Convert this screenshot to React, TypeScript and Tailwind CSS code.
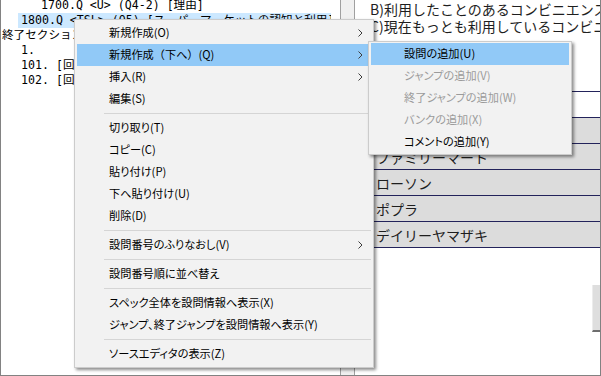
import { type FC } from 'react'
import clsx from 'clsx'

interface IMenuItem {
  readonly label: string
  readonly submenu?: boolean
  readonly active?: boolean
  readonly disabled?: boolean
  readonly fullWidth?: boolean
}

type MenuEntry = IMenuItem | 'sep'

const mainMenu: MenuEntry[] = [
  { label: '新規作成(O)', submenu: true },
  { label: '新規作成（下へ）(Q)', submenu: true, active: true, fullWidth: true },
  { label: '挿入(R)', submenu: true },
  { label: '編集(S)' },
  'sep',
  { label: '切り取り(T)' },
  { label: 'コピー(C)' },
  { label: '貼り付け(P)' },
  { label: '下へ貼り付け(U)' },
  { label: '削除(D)' },
  'sep',
  { label: '設問番号のふりなおし(V)', submenu: true },
  'sep',
  { label: '設問番号順に並べ替え' },
  'sep',
  { label: 'スペック全体を設問情報へ表示(X)' },
  { label: 'ジャンプ、終了ジャンプを設問情報へ表示(Y)' },
  'sep',
  { label: 'ソースエディタの表示(Z)' }
]

const addMenu: IMenuItem[] = [
  { label: '設問の追加(U)', active: true },
  { label: 'ジャンプの追加(V)', disabled: true },
  { label: '終了ジャンプの追加(W)', disabled: true },
  { label: 'バンクの追加(X)', disabled: true },
  { label: 'コメントの追加(Y)' }
]

const stores = [ 'セブン-イレブン', 'ファミリーマート', 'ローソン', 'ポプラ', 'デイリーヤマザキ' ]

const Chevron: FC = () => (
  <svg width="5" height="8" viewBox="0 0 5 8" className="ml-auto shrink-0">
    <polyline points="0.5,0.5 4,4 0.5,7.5" fill="none" stroke="#3c3c3c" strokeWidth="1"/>
  </svg>
)

const MenuRow: FC<{ item: IMenuItem, indent: 'main' | 'sub' }> = ({ item, indent }) => (
  <div
    className={clsx(
      'flex h-[22px] items-center pr-[8px] whitespace-nowrap',
      item.active && 'bg-[#91c9f7]',
      item.disabled ? 'text-[#9b9b9b]' : 'text-black'
    )}
  >
    <span
      className={clsx(
        indent === 'main' ? 'pl-[32px]' : 'pl-[33px]',
        item.fullWidth && '[font-feature-settings:normal]'
      )}
    >
      {item.label}
    </span>
    {item.submenu && <Chevron/>}
  </div>
)

const Separator: FC = () => (
  <div className="flex h-[7px] items-center">
    <div className="ml-[27px] h-px flex-1 bg-[#d5d5d5]"/>
  </div>
)

const menuBox = "absolute border border-[#cccccc] bg-[#f2f2f2] px-[2px] text-[11.2px] leading-none font-['Noto_Sans_CJK_JP','Noto_Sans',sans-serif] [font-feature-settings:'palt'] shadow-[2px_2px_3px_rgba(0,0,0,0.45)]"

const App: FC = () => {
  return (
    <div className="relative flex h-[376px] w-[601px] overflow-hidden border-x border-b border-[#828282] bg-white">
      <section className="w-[340px] shrink-0 overflow-hidden border-r border-[#a0a0a0] bg-white text-[11.6px] leading-[15px] text-black font-['DejaVu_Sans_Mono','Noto_Sans_CJK_JP',monospace]">
        <div className="-mt-[2px] whitespace-pre">
          <div className="pl-[40px]">1700.Q &lt;U&gt; (Q4-2) [理由]</div>
          <div className="pl-[17px]">
            <div className="w-[313px] overflow-hidden bg-[#cce8ff] px-[3px]">1800.Q &lt;TSL&gt; (Q5) [スーパーマーケットの認知と利用]</div>
          </div>
          <div className="pl-[1px]">終了セクション</div>
          <div className="pl-[20px]">1.</div>
          <div className="pl-[20px]">101. [回答者の属性]</div>
          <div className="pl-[20px]">102. [回答状況]</div>
        </div>
      </section>

      <div className="w-[14px] shrink-0 border-r border-[#a0a0a0] bg-[#f0f0f0]"/>

      <section className="relative min-w-0 flex-1 overflow-hidden bg-white text-[14px] text-[#1e1e1e] font-['Noto_Sans_CJK_JP','Noto_Sans',sans-serif]">
        <div className="pt-[1px] pl-[15px] leading-[17px] whitespace-nowrap">
          <div>B)利用したことのあるコンビニエンスストア</div>
          <div>C)現在もっとも利用しているコンビニエンスストア</div>
        </div>

        <div className="mt-[56px] ml-[18px] border-t border-l border-[#23235b]">
          <div className="h-[26px] border-b border-[#23235b] bg-white"/>
          {stores.map((name) => (
            <div key={name} className="flex h-[26px] items-center border-b border-[#23235b] bg-[#dcdcdc] pl-[2px] leading-none whitespace-nowrap">
              {name}
            </div>
          ))}
        </div>

        <div className="absolute top-[285px] right-0 h-[47px] w-[8px] border-l border-b-2 border-l-[#ececec] border-b-[#6e6e6e] bg-[#dedede]"/>
      </section>

      <div className={clsx(menuBox, 'top-[19px] left-[73px] w-[300px] py-[2px]')}>
        {mainMenu.map((entry, i) => entry === 'sep'
          ? <Separator key={i}/>
          : <MenuRow key={i} item={entry} indent="main"/>
        )}
      </div>

      <div className={clsx(menuBox, 'top-[41px] left-[367px] w-[204px] py-[1px]')}>
        {addMenu.map((item, i) => <MenuRow key={i} item={item} indent="sub"/>)}
      </div>
    </div>
  )
}

export default App
